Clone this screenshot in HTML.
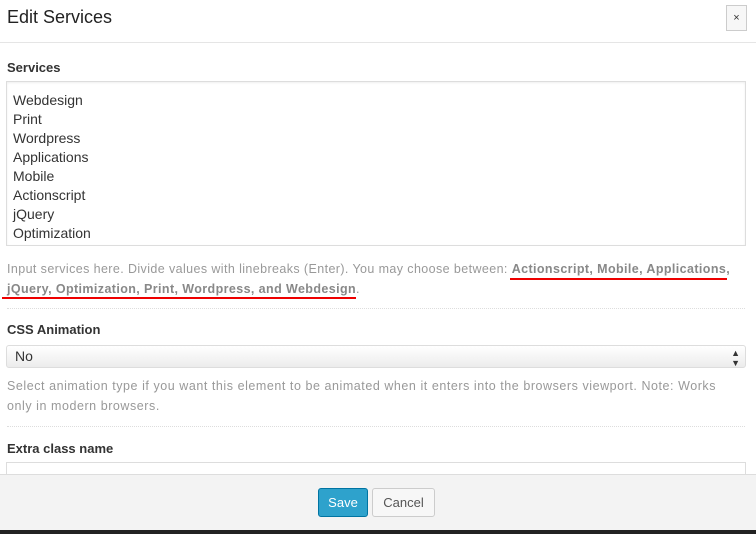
<!DOCTYPE html>
<html><head><style>
*{margin:0;padding:0;box-sizing:border-box}
body{width:756px;height:534px;overflow:hidden;background:#fff;font-family:"Liberation Sans",sans-serif;color:#333;position:relative}
.a{position:absolute}
.title{left:7px;top:7px;font-size:18px;color:#222}
.close{left:726px;top:5px;width:21px;height:26px;border:1px solid #ccc;background:#f7f7f7;font-size:11px;text-align:center;line-height:24px;color:#333}
.hr{left:0;top:42px;width:756px;border-top:1px solid #e5e5e5}
.lbl{left:7px;font-size:13px;font-weight:bold;color:#333}
.ta{left:6px;top:81px;width:740px;height:165px;border:1px solid #ddd;box-shadow:inset 0 1px 2px rgba(0,0,0,.07);padding:9px 6px;font-size:14px;line-height:19px;color:#333}
.help{left:7px;font-size:12.5px;color:#999;line-height:20px;width:760px;white-space:nowrap}
.help b{color:#888}
.dot{left:7px;width:738px;border-top:1px dotted #ddd}
.sel{left:6px;top:345px;width:740px;height:23px;border:1px solid #ddd;border-radius:3px;background:linear-gradient(#fff,#ececec);font-size:14px;line-height:21px;padding-left:8px}
.red{height:2px;background:#e00}
.foot{left:0;top:474px;width:756px;height:56px;background:#f3f3f3;border-top:1px solid #ddd}
.btn{top:488px;height:29px;border-radius:3px;font-size:13px;text-align:center;line-height:27px}
</style></head><body>
<div class="a title">Edit Services</div>
<div class="a close">×</div>
<div class="a hr"></div>
<div class="a lbl" style="top:60px">Services</div>
<div class="a ta">Webdesign<br>Print<br>Wordpress<br>Applications<br>Mobile<br>Actionscript<br>jQuery<br>Optimization</div>
<div class="a help" style="top:259px;letter-spacing:0.4px">Input services here. Divide values with linebreaks (Enter). You may choose between: <b>Actionscript, Mobile, Applications,</b><br><b>jQuery, Optimization, Print, Wordpress, and Webdesign</b>.</div>
<div class="a red" style="left:510px;top:278px;width:217px"></div>
<div class="a red" style="left:2px;top:297px;width:354px"></div>
<div class="a dot" style="top:308px"></div>
<div class="a lbl" style="top:322px">CSS Animation</div>
<div class="a sel">No<span style="position:absolute;right:5px;font-size:9px;line-height:10px;top:2px">▲<br>▼</span></div>
<div class="a help" style="top:376px;letter-spacing:0.55px">Select animation type if you want this element to be animated when it enters into the browsers viewport. Note: Works<br>only in modern browsers.</div>
<div class="a dot" style="top:426px"></div>
<div class="a lbl" style="top:441px">Extra class name</div>
<div class="a" style="left:6px;top:462px;width:740px;height:20px;border:1px solid #ddd"></div>
<div class="a foot"></div>
<div class="a btn" style="left:318px;width:50px;background:#2ea2cc;border:1px solid #0074a2;color:#fff">Save</div>
<div class="a btn" style="left:372px;width:63px;background:#f7f7f7;border:1px solid #ccc;color:#555">Cancel</div>
<div class="a" style="left:0;top:530px;width:756px;height:4px;background:#222"></div>
</body></html>
